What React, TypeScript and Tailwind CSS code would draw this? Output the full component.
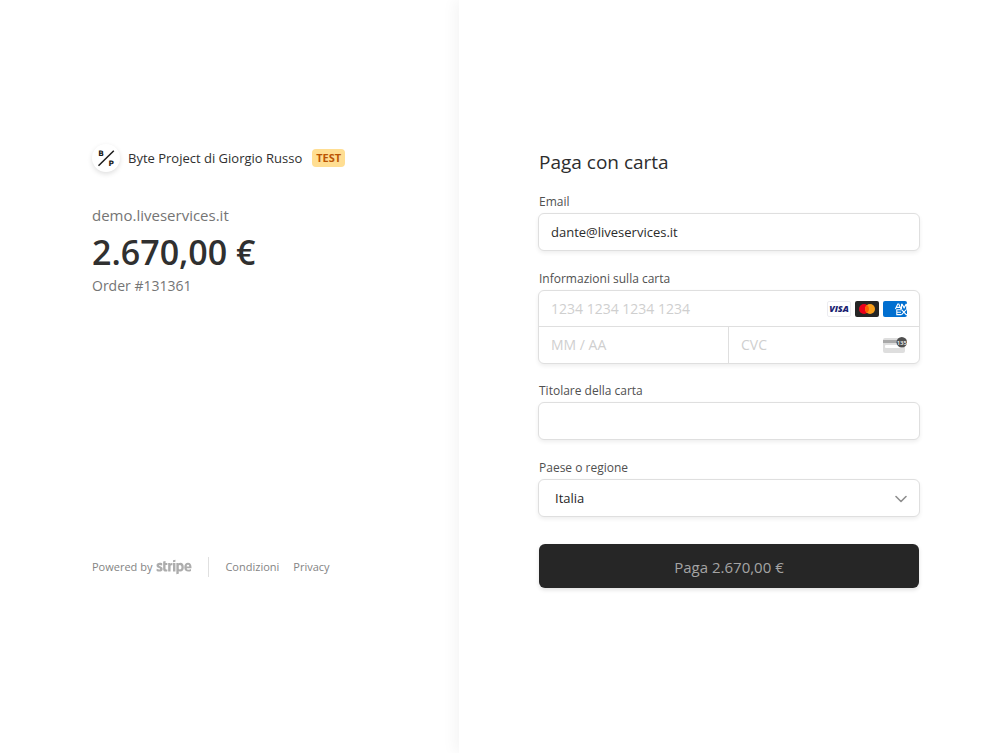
import { useState } from "react";
import type { ReactNode } from "react";
import { FaStripe } from "react-icons/fa";

const fieldBox =
  "rounded-md border border-[#dfdfdf] bg-white shadow-[0_2px_4px_rgba(0,0,0,0.07)]";
const inputText =
  "min-w-0 bg-transparent text-[13px] text-[#2b2b2b] outline-none placeholder:text-sm placeholder:text-[#cfcfcf]";

function MerchantLogo() {
  return (
    <span className="flex size-7 items-center justify-center rounded-full bg-white shadow-[0_2px_5px_rgba(0,0,0,0.13)]">
      <svg viewBox="0 0 28 28" className="size-7" aria-hidden="true">
        <path d="M6.5 21.8 L21.8 6.8" stroke="#1a1a1a" strokeWidth="1.5" />
        <text x="6.2" y="12" fontSize="7.4" fontWeight="700" fontFamily="'DejaVu Sans', sans-serif" fill="#1a1a1a">B</text>
        <text x="16.4" y="21.8" fontSize="7.4" fontWeight="700" fontFamily="'DejaVu Sans', sans-serif" fill="#1a1a1a">P</text>
      </svg>
    </span>
  );
}

function Visa() {
  return (
    <svg viewBox="0 0 24 16" className="h-4 w-6" role="img" aria-label="Visa">
      <rect x="0.5" y="0.5" width="23" height="15" rx="1.5" fill="#fff" stroke="#ececf0" />
      <text x="12" y="11.2" textAnchor="middle" fontSize="9" fontWeight="800" fontStyle="italic" fontFamily="'Open Sans', sans-serif" fill="#1a1f71">VISA</text>
    </svg>
  );
}

function Mastercard() {
  return (
    <svg viewBox="0 0 24 16" className="h-4 w-6" role="img" aria-label="Mastercard">
      <rect width="24" height="16" rx="2" fill="#252525" />
      <circle cx="9" cy="8" r="5" fill="#eb001b" />
      <circle cx="15" cy="8" r="5" fill="#f79e1b" />
      <path d="M12 4a5 5 0 0 1 0 8a5 5 0 0 1 0-8Z" fill="#ff5f00" />
    </svg>
  );
}

function Amex() {
  return (
    <svg viewBox="0 0 24 16" className="h-4 w-6" role="img" aria-label="American Express">
      <rect width="24" height="16" rx="2" fill="#016fd0" />
      <g fill="none" stroke="#fff" strokeWidth="1.1">
        <path d="M12.4 8 14.8 3h1l2.2 5M13.6 6.4h3.4M18.5 8V3.4h0.7l1.9 3.4 1.9-3.4h0.7V8" />
        <path d="M18.4 8.7h-4.6v4.9h4.6M14 11.2h4M18.6 8.7l4.6 4.9H24M24 8.7h-0.8l-4.6 4.9" />
      </g>
    </svg>
  );
}

function CvcCard() {
  return (
    <svg viewBox="0 0 24 16" className="h-4 w-6" aria-hidden="true">
      <rect y="1" width="22" height="15" rx="2" fill="#dedede" />
      <rect y="3" width="22" height="3" fill="#a9a9a9" />
      <rect x="2" y="8" width="18" height="3" rx="1" fill="#fff" />
      <circle cx="18.8" cy="5.3" r="5.3" fill="#4f4f4f" />
      <text x="18.8" y="7.5" textAnchor="middle" fontSize="6" fontWeight="600" fontFamily="'Open Sans', sans-serif" fill="#fff">135</text>
    </svg>
  );
}

function Label({ htmlFor, children }: { htmlFor: string; children: ReactNode }) {
  return (
    <label htmlFor={htmlFor} className="mb-px block px-px text-xs leading-5 text-[#505050]">
      {children}
    </label>
  );
}

function Summary() {
  return (
    <section className="bg-white pt-36 pl-[92px]">
      <header className="flex items-center">
        <MerchantLogo />
        <h1 className="ml-2 text-[13px] leading-5 text-[#303030]">Byte Project di Giorgio Russo</h1>
        <span className="ml-2.5 rounded bg-[#ffde92] px-1 text-[11px] leading-[18px] font-bold text-[#bb5504]">
          TEST
        </span>
      </header>
      <p className="mt-8 text-[15px] leading-[22px] text-[#757575]">demo.liveservices.it</p>
      <p className="text-[34px] leading-[52px] font-semibold text-[#303030]">2.670,00 €</p>
      <p className="text-sm leading-4 text-[#757575]">Order #131361</p>
      <footer className="mt-[259px] flex items-center text-[11px] leading-5 text-[#848484]">
        <a href="#stripe" className="flex items-center">
          Powered by
          <FaStripe className="ml-1 h-7 w-9 text-[#adadad]" aria-label="stripe" />
        </a>
        <span className="mx-4 h-5 w-px bg-[#e0e0e0]" />
        <nav className="flex gap-3.5">
          <a href="#condizioni">Condizioni</a>
          <a href="#privacy">Privacy</a>
        </nav>
      </footer>
    </section>
  );
}

function PaymentForm() {
  const [email, setEmail] = useState("dante@liveservices.it");
  return (
    <form className="pt-[150px] pr-[66px] pl-[79px]" onSubmit={(e) => e.preventDefault()}>
      <h2 className="mb-[18px] px-px text-[19px] leading-6 text-[#2d2d2d]">Paga con carta</h2>

      <Label htmlFor="email">Email</Label>
      <input
        id="email"
        type="email"
        value={email}
        onChange={(e) => setEmail(e.target.value)}
        className={`${fieldBox} ${inputText} mb-[18px] block h-[38px] w-full px-3`}
      />

      <Label htmlFor="card">Informazioni sulla carta</Label>
      <div className={`${fieldBox} mb-[17px]`}>
        <div className="flex h-9 items-center border-b border-[#dfdfdf] px-3">
          <input id="card" placeholder="1234 1234 1234 1234" className={`${inputText} flex-1 pt-0.5`} />
          <div className="flex gap-1">
            <Visa />
            <Mastercard />
            <Amex />
          </div>
        </div>
        <div className="grid h-9 grid-cols-2">
          <input aria-label="Scadenza" placeholder="MM / AA" className={`${inputText} px-3 pt-0.5`} />
          <div className="-ml-px flex items-center border-l border-[#dfdfdf] px-3">
            <input aria-label="CVC" placeholder="CVC" className={`${inputText} flex-1 pt-0.5`} />
            <CvcCard />
          </div>
        </div>
      </div>

      <Label htmlFor="holder">Titolare della carta</Label>
      <input id="holder" className={`${fieldBox} ${inputText} mb-[18px] block h-[38px] w-full px-3`} />

      <Label htmlFor="country">Paese o regione</Label>
      <div className="relative">
        <select id="country" className={`${fieldBox} block h-[38px] w-full appearance-none px-4 pt-0.5 text-[13px] text-[#1f1f1f]`}>
          <option>Italia</option>
        </select>
        <svg viewBox="0 0 12 12" className="pointer-events-none absolute top-[14px] right-[13px] size-3" aria-hidden="true">
          <path d="M1 3.5 6 8.5 11 3.5" fill="none" stroke="#8f8f8f" strokeWidth="1.6" strokeLinecap="round" strokeLinejoin="round" />
        </svg>
      </div>

      <div className="px-px">
        <button
          type="submit"
          className="mt-[27px] h-11 w-full rounded-md bg-[#262626] pt-0.5 text-[15px] text-[#a4a4a4] shadow-[0_2px_4px_rgba(0,0,0,0.12)]"
        >
          Paga 2.670,00 €
        </button>
      </div>
    </form>
  );
}

export default function App() {
  return (
    <div className="min-h-screen overflow-hidden bg-white font-['Open_Sans','Noto_Sans',sans-serif]">
      <main className="grid grid-cols-[459fr_527fr]">
        <Summary />
        <div className="min-h-screen bg-white shadow-[-3px_0_15px_rgba(0,0,0,0.05)]">
          <PaymentForm />
        </div>
      </main>
    </div>
  );
}
